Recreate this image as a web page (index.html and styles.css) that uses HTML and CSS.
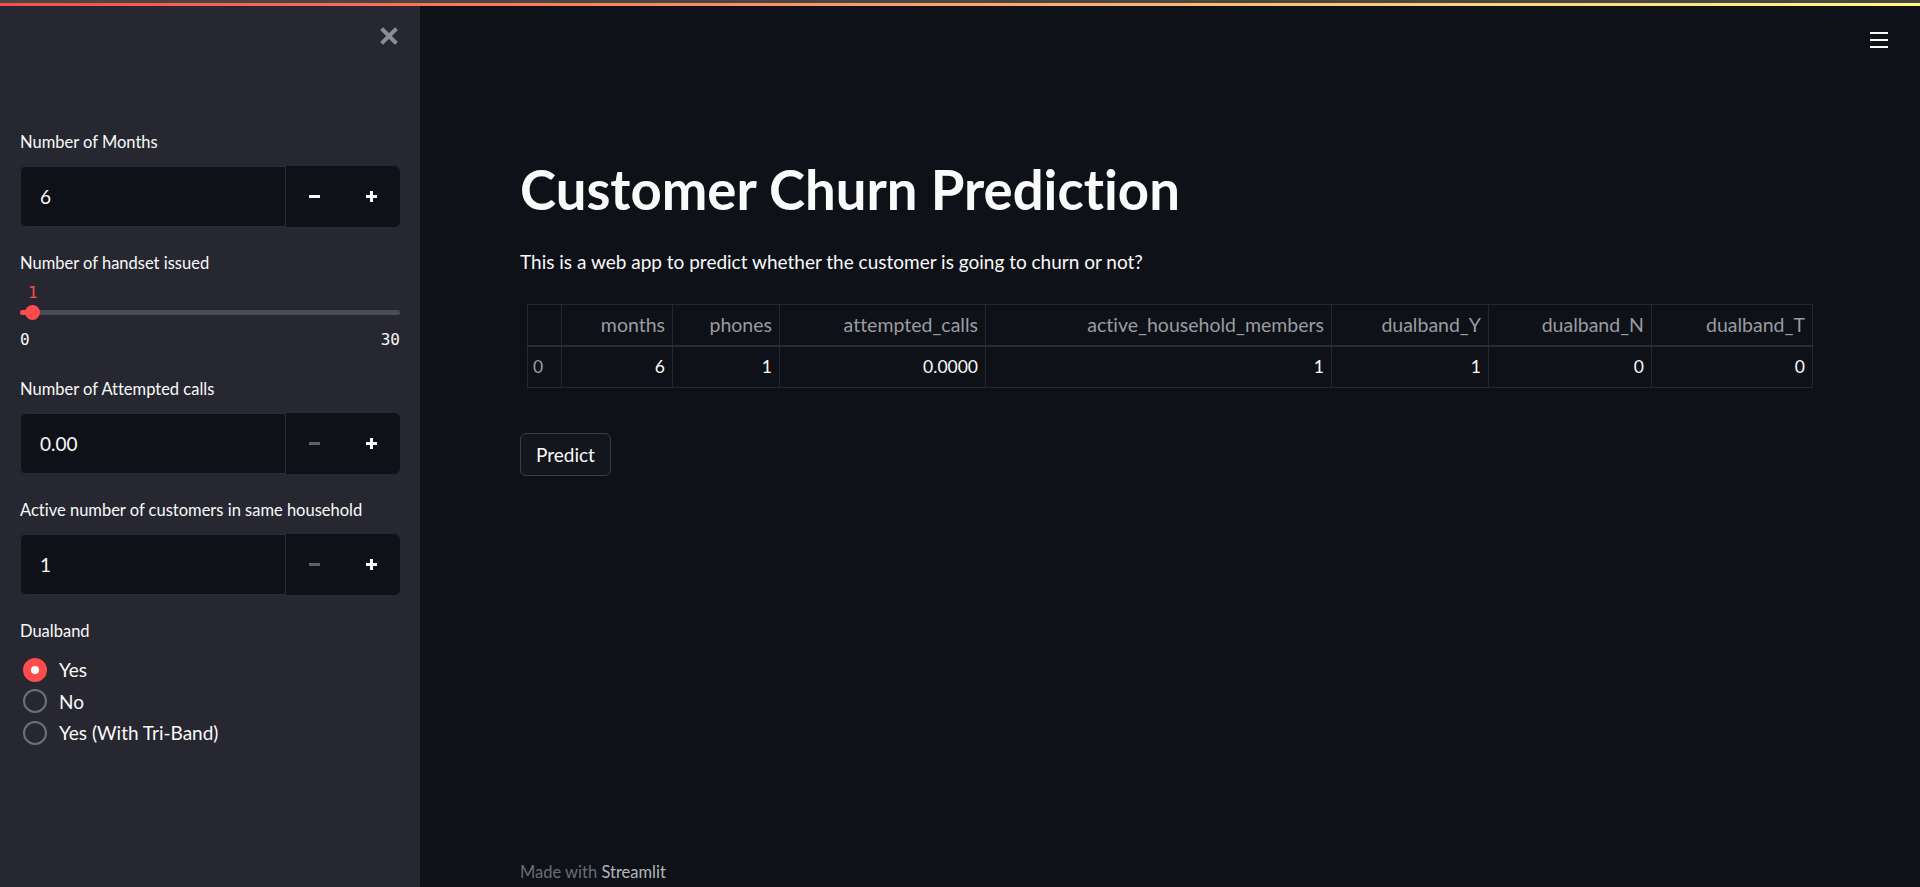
FILE: index.html
```html
<!DOCTYPE html>
<html lang="en">
<head>
<meta charset="utf-8">
<title>Customer Churn Prediction</title>
<link rel="stylesheet" href="styles.css">
</head>
<body>
<div class="topbar"></div>
<div class="deco"></div>
<div class="app">
  <aside class="sidebar">
    <div class="sb-head">
      <svg class="close" viewBox="0 0 18 18" width="18" height="18"><path d="M3 3L15 15M15 3L3 15" stroke="#8b8c95" stroke-width="4" stroke-linecap="square"/></svg>
    </div>
    <div class="widgets">
      <div class="widget">
        <div class="label">Number of Months</div>
        <div class="numinput">
          <div class="numfield">6</div>
          <div class="step"><span class="minus"></span></div>
          <div class="step"><span class="plus"></span></div>
        </div>
      </div>
      <div class="widget">
        <div class="label">Number of handset issued</div>
        <div class="slider">
          <div class="slider-val"><span class="thumb-val">1</span></div>
          <div class="track-wrap">
            <div class="track"><div class="track-fill"></div><div class="thumb"></div></div>
          </div>
          <div class="minmax"><span>0</span><span>30</span></div>
        </div>
      </div>
      <div class="widget">
        <div class="label">Number of Attempted calls</div>
        <div class="numinput">
          <div class="numfield">0.00</div>
          <div class="step"><span class="minus off"></span></div>
          <div class="step"><span class="plus"></span></div>
        </div>
      </div>
      <div class="widget">
        <div class="label">Active number of customers in same household</div>
        <div class="numinput">
          <div class="numfield">1</div>
          <div class="step"><span class="minus off"></span></div>
          <div class="step"><span class="plus"></span></div>
        </div>
      </div>
      <div class="widget">
        <div class="label">Dualband</div>
        <div class="radios">
          <div class="radio"><span class="dot on"></span><span>Yes</span></div>
          <div class="radio"><span class="dot"></span><span>No</span></div>
          <div class="radio"><span class="dot"></span><span>Yes (With Tri-Band)</span></div>
        </div>
      </div>
    </div>
  </aside>
  <main class="main">
    <div class="main-head">
      <svg class="burger" viewBox="0 0 18 16" width="18" height="16"><path d="M0 1H18M0 8H18M0 15H18" stroke="#fafafa" stroke-width="2"/></svg>
    </div>
    <div class="content">
      <h1 class="title">Customer Churn Prediction</h1>
      <p class="intro">This is a web app to predict whether the customer is going to churn or not?</p>
      <table class="df">
        <colgroup>
          <col class="c-idx"><col class="c-months"><col class="c-phones"><col class="c-calls"><col class="c-active"><col class="c-y"><col class="c-n"><col class="c-t">
        </colgroup>
        <thead>
          <tr><th></th><th>months</th><th>phones</th><th>attempted_calls</th><th>active_household_members</th><th>dualband_Y</th><th>dualband_N</th><th>dualband_T</th></tr>
        </thead>
        <tbody>
          <tr><td class="idx">0</td><td>6</td><td>1</td><td>0.0000</td><td>1</td><td>1</td><td>0</td><td>0</td></tr>
        </tbody>
      </table>
      <button class="btn">Predict</button>
    </div>
    <footer class="footer">Made with <span class="brand">Streamlit</span></footer>
  </main>
</div>
</body>
</html>
```
FILE: styles.css
```css
* { box-sizing: border-box; }
html, body { margin: 0; padding: 0; }
body {
  background: #0e1117;
  color: #fafafa;
  font-family: "Lato", "Noto Sans", sans-serif;
  font-variant-ligatures: none;
  height: 887px;
  overflow: hidden;
  display: flex;
  flex-direction: column;
}
.topbar { height: 3px; background: #464646; }
.deco { height: 3px; background: linear-gradient(90deg, #ff4b4b, #fffd80); }
.app { flex: 1; display: flex; min-height: 0; }

.sidebar {
  width: 420px;
  flex: none;
  background: #262730;
  padding: 0 20px;
}
.sb-head {
  height: 60px;
  display: flex;
  justify-content: flex-end;
  align-items: center;
  padding-right: 2px;
}
.widgets {
  margin-top: 62px;
  display: flex;
  flex-direction: column;
  gap: 22px;
}
.label {
  font-size: 16.5px;
  line-height: 28px;
  height: 28px;
  margin-bottom: 10px;
  color: #fafafa;
  white-space: nowrap;
}
.numinput {
  height: 61px;
  display: flex;
  background: #0e1117;
  border-radius: 6px;
  overflow: hidden;
}
.numfield {
  flex: none;
  width: 266px;
  border: 1px solid #2a2c35;
  border-radius: 6px 0 0 6px;
  padding-left: 19px;
  display: flex;
  align-items: center;
  font-size: 19px;
}
.step {
  flex: 1;
  display: flex;
  align-items: center;
  justify-content: center;
}
.minus { width: 11px; height: 3px; background: #fafafa; }
.minus.off { background: #5f616a; }
.plus { position: relative; width: 11px; height: 11px; }
.plus::before, .plus::after { content: ""; position: absolute; background: #fafafa; }
.plus::before { left: 0; top: 4px; width: 11px; height: 3px; }
.plus::after { left: 4px; top: 0; width: 3px; height: 11px; }

.slider { display: flex; flex-direction: column; margin-top: -10px; }
.slider-val {
  margin-top: 6px;
  height: 20px;
  font-family: "DejaVu Sans Mono", "Liberation Mono", monospace;
  font-size: 16px;
  line-height: 20px;
  color: #ff4b4b;
  padding-left: 8px;
}
.track-wrap { height: 18px; display: flex; align-items: center; }
.track {
  position: relative;
  width: 100%;
  height: 5px;
  border-radius: 3px;
  background: #4a4b55;
}
.track-fill {
  position: absolute;
  left: 0; top: 0; bottom: 0;
  width: 12px;
  background: #ff4b4b;
  border-radius: 3px 0 0 3px;
}
.thumb {
  position: absolute;
  left: 5px; top: -5px;
  width: 15px; height: 15px;
  border-radius: 50%;
  background: #ff4b4b;
}
.minmax {
  margin-top: 5px;
  height: 27px;
  line-height: 27px;
  display: flex;
  justify-content: space-between;
  font-family: "DejaVu Sans Mono", "Liberation Mono", monospace;
  font-size: 16px;
  color: #fafafa;
}

.radios { display: flex; flex-direction: column; margin-top: -1px; }
.radio {
  height: 31.5px;
  display: flex;
  align-items: center;
  gap: 12px;
  padding-left: 3px;
  font-size: 19px;
}
.dot {
  width: 24px; height: 24px;
  border-radius: 50%;
  border: 2px solid #6f7077;
  display: flex;
  align-items: center;
  justify-content: center;
}
.dot.on { border-color: #ff4b4b; background: #ff4b4b; }
.dot.on::after { content: ""; width: 8px; height: 8px; border-radius: 50%; background: #fafafa; }

.main {
  flex: 1;
  display: flex;
  flex-direction: column;
  min-width: 0;
}
.main-head {
  height: 68px;
  display: flex;
  justify-content: flex-end;
  align-items: center;
  padding-right: 32px;
}
.content { padding: 0 100px; flex: 1; }
.title {
  margin: 82px 0 0;
  font-size: 54.5px;
  line-height: 66px;
  font-weight: 700;
  color: #fafafa;
}
.intro {
  margin: 24px 0 0;
  font-size: 19px;
  line-height: 32px;
}
.df {
  margin: 26px 0 0 7px;
  border-collapse: collapse;
  table-layout: fixed;
  width: 1285px;
  font-size: 17.5px;
}
.c-idx { width: 34px; }
.c-months { width: 111px; }
.c-phones { width: 107px; }
.c-calls { width: 206px; }
.c-active { width: 346px; }
.c-y { width: 157px; }
.c-n { width: 163px; }
.c-t { width: 161px; }
.df th, .df td {
  border: 1px solid #26282e;
  text-align: right;
  padding: 0 7px 0 5px;
  white-space: nowrap;
}
.df th {
  height: 41px;
  font-weight: 400;
  font-size: 19.5px;
  color: #9a9ca1;
  border-bottom: 2px solid #2b2d33;
}
.df td { height: 42px; color: #fafafa; }
.df td.idx { text-align: left; color: #9a9ca1; }
.btn {
  margin-top: 45px;
  height: 43px;
  padding: 0 15px;
  background: #13161d;
  border: 1px solid #3b3d44;
  border-radius: 6px;
  color: #fafafa;
  font-family: inherit;
  font-size: 19px;
}
.footer {
  padding-left: 100px;
  height: 28px;
  line-height: 28px;
  margin-bottom: 1px;
  font-size: 16.5px;
  color: #6c6e74;
}
.brand { color: #b5b7bb; }
```
